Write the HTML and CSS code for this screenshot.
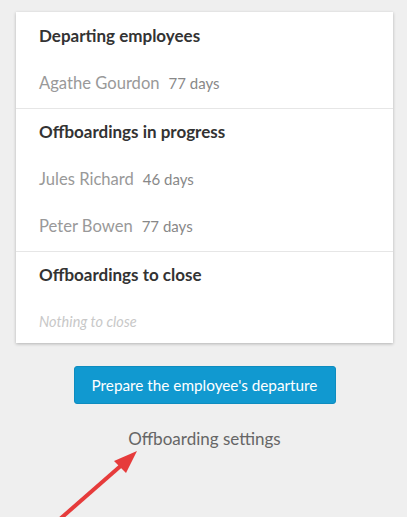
FILE: index.html
```html
<!DOCTYPE html>
<html>
<head>
<meta charset="utf-8">
<link rel="stylesheet" href="styles.css">
</head>
<body>
<div class="page">
  <div class="card">
    <section class="section">
      <h2 class="title">Departing employees</h2>
      <div class="item"><span class="name">Agathe Gourdon</span><span class="days">77 days</span></div>
    </section>
    <section class="section">
      <h2 class="title">Offboardings in progress</h2>
      <div class="item"><span class="name">Jules Richard</span><span class="days">46 days</span></div>
      <div class="item"><span class="name">Peter Bowen</span><span class="days">77 days</span></div>
    </section>
    <section class="section last">
      <h2 class="title">Offboardings to close</h2>
      <div class="empty">Nothing to close</div>
    </section>
  </div>
  <div class="actions">
    <button class="btn">Prepare the employee's departure</button>
    <a class="settings">Offboarding settings</a>
  </div>
</div>
<svg class="arrow" width="407" height="517" viewBox="0 0 407 517">
  <line x1="60" y1="519" x2="124" y2="463" stroke="#e63b3b" stroke-width="4"/>
  <polygon points="137,451 114,461 126,473" fill="#e63b3b"/>
</svg>
</body>
</html>
```
FILE: styles.css
```css
html, body {
  margin: 0;
  padding: 0;
  background: #efefef;
  font-family: "Source Sans Pro", "Lato", "Open Sans", sans-serif;
}
.page {
  padding: 12px 14px 0 16px;
}
.card {
  background: #fff;
  box-shadow: 0 1px 3px rgba(0,0,0,0.25);
  width: 377px;
}
.section {
  padding: 11px 23px 12px;
  border-bottom: 1px solid #e6e6e6;
}
.section + .section {
  padding-top: 10px;
}
.section.last {
  border-bottom: none;
  padding-bottom: 11px;
}
.title {
  margin: 0;
  font-size: 17px;
  font-weight: 700;
  color: #333;
  line-height: 26px;
}
.item {
  margin-top: 21px;
  line-height: 26px;
}
.section .item + .item {
  margin-top: 21px;
}
.name {
  font-size: 16.6px;
  color: #999;
}
.days {
  font-size: 15px;
  color: #888;
  margin-left: 9px;
}
.empty {
  margin-top: 24px;
  font-size: 14.5px;
  font-style: italic;
  color: #c8c8c8;
  line-height: 20px;
}
.actions {
  display: flex;
  flex-direction: column;
  align-items: center;
  padding-top: 23px;
  width: 377px;
}
.btn {
  width: 262px;
  height: 38px;
  background: #1199d0;
  border: 1px solid #0e8cbf;
  border-radius: 3px;
  color: #fff;
  font-family: inherit;
  font-size: 15.3px;
  padding: 0;
}
.settings {
  margin-top: 24px;
  font-size: 17px;
  color: #666;
}
.arrow {
  position: absolute;
  left: 0;
  top: 0;
  pointer-events: none;
}
```
